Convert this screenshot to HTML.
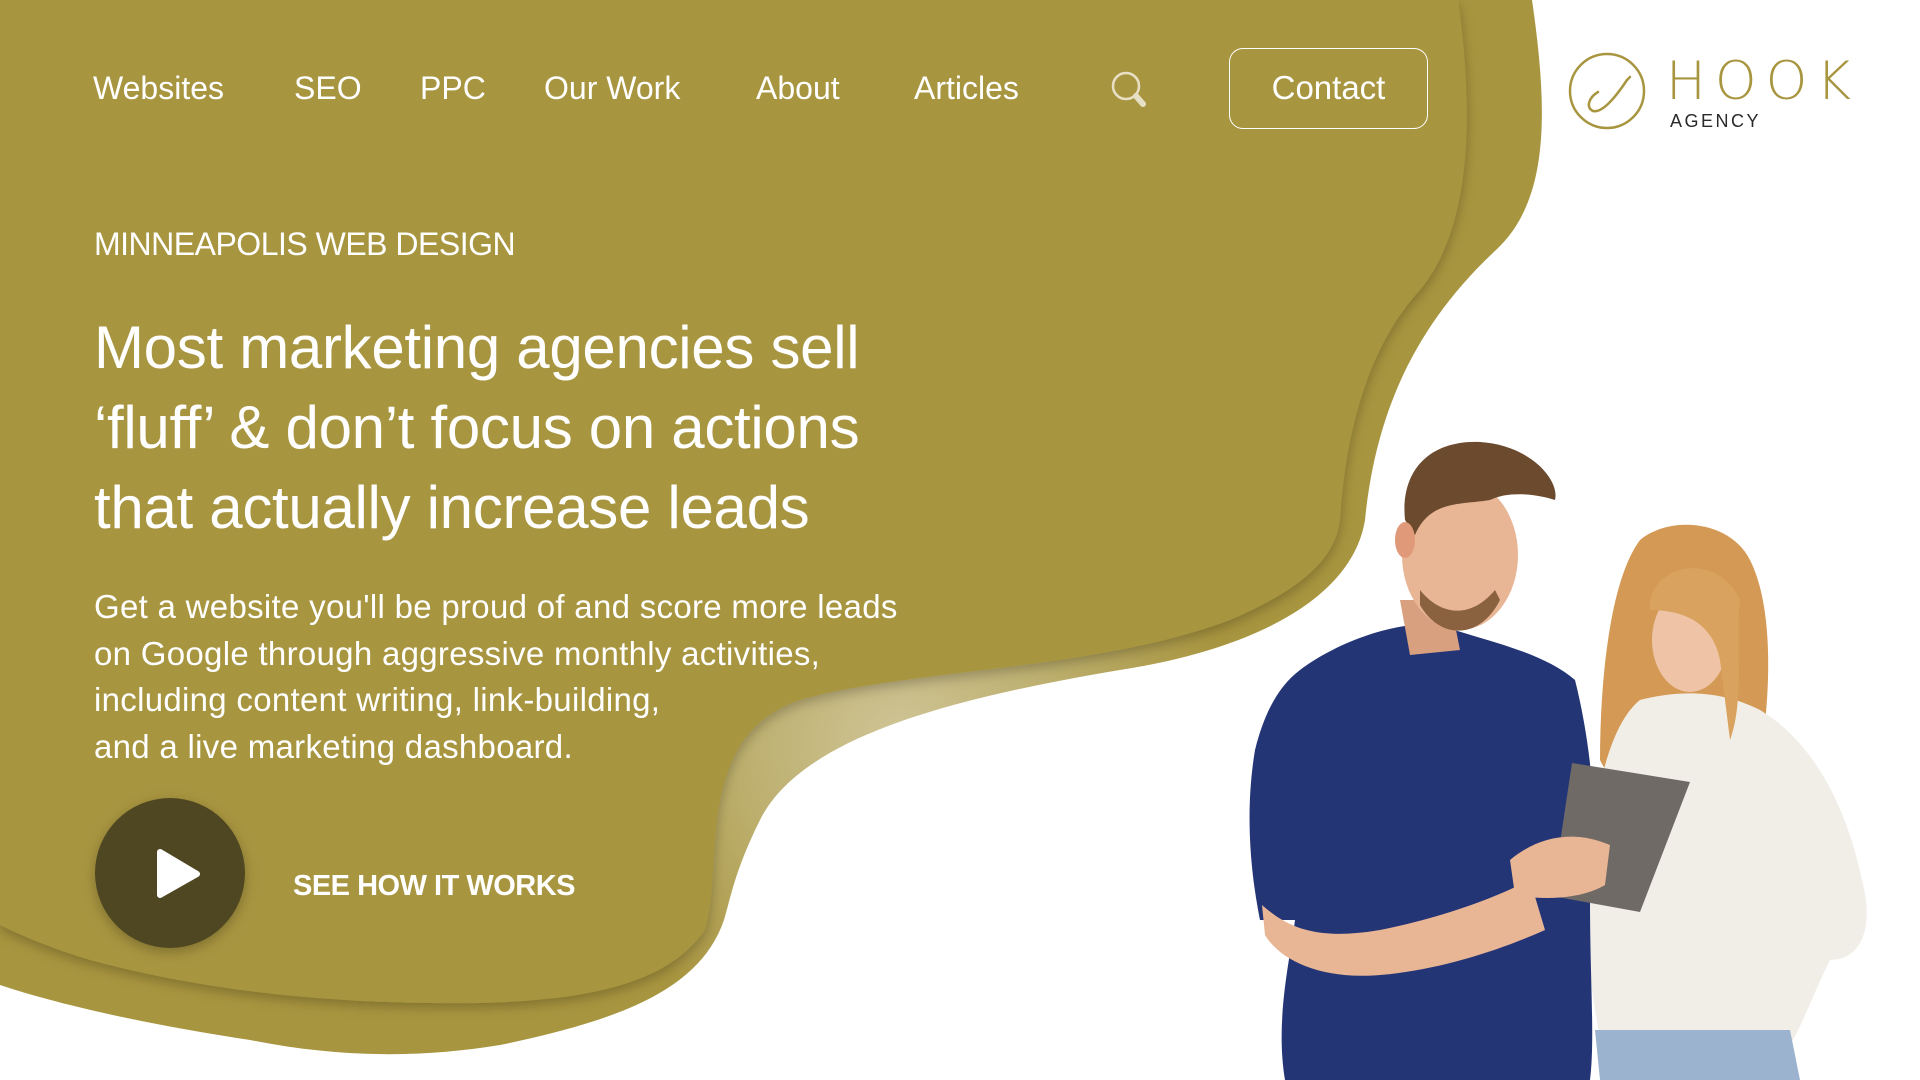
<!DOCTYPE html>
<html><head><meta charset="utf-8"><style>
*{margin:0;padding:0;box-sizing:border-box}
body{width:1920px;height:1080px;overflow:hidden;background:#fff;font-family:"Liberation Sans",sans-serif;position:relative;color:#fff}
svg.bg{position:absolute;left:0;top:0}
.nav{position:absolute;top:70px;font-size:32px;color:#fff}
.t{position:absolute;left:94px;color:#fff}
</style></head><body>
<svg class="bg" width="1920" height="1080" viewBox="0 0 1920 1080">
<defs>
<radialGradient id="g1" gradientUnits="userSpaceOnUse" cx="900" cy="740" r="330">
<stop offset="0" stop-color="#cfc496"/><stop offset="0.5" stop-color="#bcae6c"/><stop offset="1" stop-color="#a8953f"/>
</radialGradient>
<filter id="sh" x="-10%" y="-10%" width="120%" height="120%"><feDropShadow dx="0" dy="4" stdDeviation="6" flood-color="#000" flood-opacity="0.25"/></filter>
</defs>
<path d="M0,0 H1532 C1548,110 1550,200 1496,250 C1410,330 1375,420 1365,520 C1352,600 1250,650 1120,670 C940,700 800,740 760,820 C735,870 730,900 724,920 C700,990 620,1020 500,1045 C420,1058 340,1058 250,1040 C150,1025 60,1005 0,985 Z" fill="url(#g1)"/>
<path d="M0,0 H1458 C1475,120 1470,230 1420,290 C1365,350 1345,440 1340,520 C1335,560 1300,590 1230,620 C1100,670 900,670 800,700 C740,720 720,770 715,840 C712,880 712,905 705,930 C670,980 600,1000 480,1003 C330,1005 200,990 90,960 C50,948 20,935 0,925 Z" fill="#a8953f" filter="url(#sh)"/>
<g>
<path d="M1640,540 C1670,515 1730,520 1750,560 C1775,610 1770,700 1760,760 C1750,820 1730,840 1700,840 C1660,830 1620,800 1600,760 C1600,680 1610,580 1640,540Z" fill="#d49a55"/>
<path d="M1640,700 C1680,690 1720,690 1760,710 C1810,740 1845,800 1862,880 C1875,930 1860,960 1830,960 C1815,990 1800,1030 1790,1045 L1600,1040 C1590,980 1580,920 1590,840 C1600,770 1615,720 1640,700Z" fill="#f1eee8"/>
<path d="M1595,1030 L1790,1030 L1800,1080 L1600,1080Z" fill="#9bb3cf"/>
<ellipse cx="1690" cy="640" rx="38" ry="52" fill="#efc3a6"/>
<path d="M1650,600 C1660,560 1720,555 1740,600 C1735,640 1745,700 1730,740 L1720,660 C1712,620 1680,610 1650,610Z" fill="#d9a25e"/>
<path d="M1300,670 C1340,640 1400,620 1440,625 C1480,640 1540,650 1575,680 C1590,740 1600,820 1590,900 C1590,980 1595,1040 1590,1080 L1285,1080 C1275,1020 1290,960 1295,920 L1260,920 C1250,870 1245,810 1255,750 C1265,710 1280,685 1300,670Z" fill="#243576"/>
<path d="M1262,905 C1290,930 1320,940 1380,930 C1440,918 1490,900 1530,880 L1545,930 C1500,950 1440,970 1380,975 C1320,980 1280,960 1265,935Z" fill="#e8b595"/>
<path d="M1400,600 L1450,600 L1460,650 L1410,655Z" fill="#d9a080"/>
<ellipse cx="1460" cy="555" rx="58" ry="75" fill="#e8b595"/>
<path d="M1420,605 C1440,640 1480,640 1500,600 L1495,590 C1470,620 1440,615 1420,590Z" fill="#8a6240"/>
<path d="M1405,520 C1400,470 1430,440 1480,442 C1530,445 1560,480 1555,500 C1540,495 1510,490 1490,500 C1460,505 1430,500 1415,535Z" fill="#6b4a2e"/>
<ellipse cx="1405" cy="540" rx="10" ry="18" fill="#e09a7a"/>
<path d="M1572,763 L1690,782 L1640,912 L1552,896Z" fill="#6f6a66"/>
<path d="M1510,860 C1540,835 1575,830 1610,845 L1605,885 C1580,900 1540,900 1515,895Z" fill="#e8b595"/>
</g>
<circle cx="1607" cy="91" r="37" fill="none" stroke="#a8953f" stroke-width="2.5"/>
<path d="M1598,92 C1588,98 1586,108 1593,111 C1601,113 1613,101 1627,80 M1627,80 l3,-3" fill="none" stroke="#a8953f" stroke-width="2.5" stroke-linecap="round"/>
<text x="1666" y="99" font-family="DejaVu Sans, Liberation Sans, sans-serif" font-weight="200" font-size="53" letter-spacing="9" fill="#a8953f">HOOK</text>
<circle cx="1126" cy="86" r="13" fill="none" stroke="#e8e0c4" stroke-width="2.5"/>
<path d="M1136,96 L1143,104" stroke="#e8e0c4" stroke-width="6" stroke-linecap="round"/>
<circle cx="170" cy="873" r="75" fill="#4f4620" filter="url(#sh)"/>
<path d="M160,852 L160,895 L197,874Z" fill="#fff" stroke="#fff" stroke-width="6" stroke-linejoin="round"/>
</svg>
<div class="nav" style="left:93px">Websites</div>
<div class="nav" style="left:294px">SEO</div>
<div class="nav" style="left:420px">PPC</div>
<div class="nav" style="left:544px">Our Work</div>
<div class="nav" style="left:756px">About</div>
<div class="nav" style="left:914px">Articles</div>
<div style="position:absolute;left:1229px;top:48px;width:199px;height:81px;border:1.5px solid #fff;border-radius:14px;font-size:33px;text-align:center;line-height:78px">Contact</div>
<div style="position:absolute;left:1670px;top:111px;font-size:18px;color:#2a2a2a;letter-spacing:2.5px">AGENCY</div>
<div class="t" style="top:226px;font-size:32px;letter-spacing:-0.5px">MINNEAPOLIS WEB DESIGN</div>
<div class="t" style="top:308px;font-size:60px;line-height:80px;letter-spacing:-0.3px">Most marketing agencies sell<br>‘fluff’ &amp; don’t focus on actions<br>that actually increase leads</div>
<div class="t" style="top:584px;font-size:33px;line-height:46.5px;letter-spacing:0.3px">Get a website you'll be proud of and score more leads<br>on Google through aggressive monthly activities,<br>including content writing, link-building,<br>and a live marketing dashboard.</div>
<div style="position:absolute;left:293px;top:870px;font-size:29px;font-weight:bold;letter-spacing:-0.5px">SEE HOW IT WORKS</div>
</body></html>
